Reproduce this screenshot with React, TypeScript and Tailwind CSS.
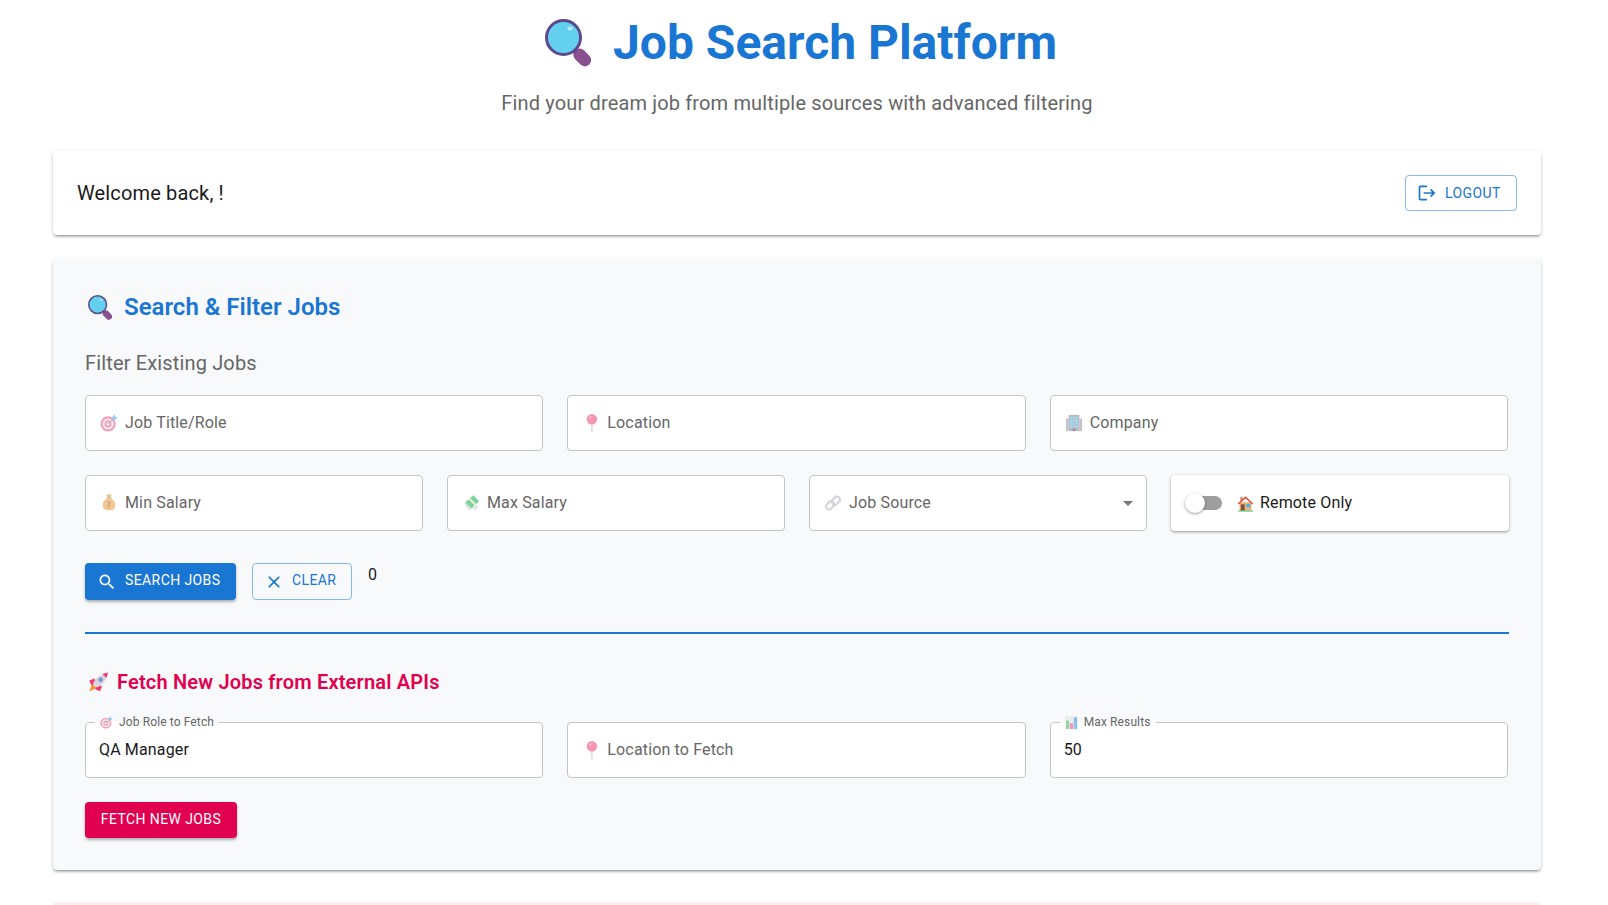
import type { ReactNode } from 'react';

const FONT = "font-['Roboto','Liberation_Sans',sans-serif]";
const CARD_SHADOW = 'shadow-[0_2px_3px_-1px_rgba(0,0,0,0.45),0_1px_5px_rgba(0,0,0,0.1)]';

// Emoji drawings, the reference has colour emoji next to most labels
const Magnifier = ({ className }: { className: string }) => (
  <svg viewBox="0 0 48 48" className={className}>
    <rect x="31" y="28.5" width="12.5" height="20" rx="6.2" transform="rotate(-45 37.2 38.5)" fill="#8a4f8f" />
    <rect x="27" y="28" width="4" height="6" transform="rotate(-45 29 31)" fill="#5c4a7e" />
    <circle cx="18.5" cy="18.5" r="17" fill="#62d0ee" stroke="#5d4a8c" strokeWidth="3" />
    <ellipse cx="25" cy="9.5" rx="2.6" ry="2" fill="#b5e9f7" />
  </svg>
);

const Target = ({ className = 'h-[18px] w-[18px]' }: { className?: string }) => (
  <svg viewBox="0 0 20 20" className={className}>
    <circle cx="9" cy="11" r="8.4" fill="#ef5f85" />
    <circle cx="9" cy="11" r="6" fill="#f4f0f2" />
    <circle cx="9" cy="11" r="4" fill="#ef5f85" />
    <circle cx="9" cy="11" r="1.8" fill="#f4f0f2" />
    <path d="M9 11 16 4" stroke="#6f8fb8" strokeWidth="1.4" />
    <path d="M13.5 3 16.5 .5 17 3 19.5 3.5 17 6.5 14.5 6z" fill="#55aef0" />
  </svg>
);

const Pin = () => (
  <svg viewBox="0 0 20 20" className="h-[18px] w-[18px]">
    <rect x="10.1" y="9" width="1.8" height="11" fill="#c9c5c7" />
    <circle cx="11" cy="5.8" r="5.8" fill="#f0527f" />
    <circle cx="9.2" cy="3.8" r="1.3" fill="#f79ab6" />
  </svg>
);

const Building = () => (
  <svg viewBox="0 0 20 20" className="h-[18px] w-[18px]">
    <rect x="1" y="5" width="3" height="14" fill="#9d9aa8" />
    <rect x="16" y="5" width="3" height="14" fill="#9d9aa8" />
    <rect x="4" y="1" width="12" height="18" fill="#8e8b9b" />
    <rect x="5.5" y="3" width="9" height="12" fill="#62c4ee" />
    <path d="M8.5 3v12M11.5 3v12M5.5 6h9M5.5 9h9M5.5 12h9" stroke="#8e8b9b" strokeWidth=".7" />
    <rect x="8.5" y="16" width="3" height="3" fill="#4a4858" />
  </svg>
);

const MoneyBag = () => (
  <svg viewBox="0 0 20 20" className="h-[18px] w-[18px]">
    <path d="M7 .5h6L11.5 4h-3z" fill="#e09a45" />
    <rect x="7.5" y="3.6" width="5" height="1.4" fill="#a9703a" />
    <path d="M7.5 5C4 7 3 10 3 13c0 3.5 2.5 5 7 5s7-1.5 7-5c0-3-1-6-4.5-8z" fill="#eca24e" />
    <path d="M10 8v7M8.6 9.8c0-1.6 2.8-1.6 2.8 0s-2.8 1.2-2.8 3c0 1.6 2.8 1.6 2.8 0" stroke="#a05f24" strokeWidth=".8" fill="none" />
  </svg>
);

const WingedMoney = () => (
  <svg viewBox="0 0 20 20" className="h-[18px] w-[18px]">
    <path d="M3 9 4 14 2.5 12 9 19 10.5 16z" fill="#cfd2d8" />
    <path d="M12 16 16 12 18 15 14 18z" fill="#cfd2d8" />
    <path d="M3.5 9.5 12.5 1.5 19 8 10.5 16z" fill="#22b36a" />
    <path d="M7 5.8 8.6 4.3 15.6 11.2 14 12.7z" fill="#f2e6a0" />
  </svg>
);

const LinkIcon = () => (
  <svg viewBox="0 0 20 20" className="h-[18px] w-[18px]" fill="none" stroke="#b8b5c6" strokeWidth="2.2">
    <rect x="1.8" y="9.2" width="10" height="6.6" rx="3.3" transform="rotate(-45 6.8 12.5)" />
    <rect x="8.2" y="4.2" width="10" height="6.6" rx="3.3" transform="rotate(-45 13.2 7.5)" />
  </svg>
);

const House = () => (
  <svg viewBox="0 0 20 20" className="h-[17px] w-[17px]">
    <rect x="4" y="2" width="2.5" height="5" fill="#c98a6a" />
    <rect x="3" y="8.5" width="14" height="10" fill="#eab47a" />
    <path d="M10 1.5 .8 10l1.3 1.2L10 4l7.9 7.2L19.2 10z" fill="#e8503f" />
    <rect x="4.5" y="11" width="4.5" height="7.5" fill="#7d5340" />
    <rect x="11" y="10.5" width="4.5" height="4" fill="#4fb3ee" />
    <rect x="1" y="18.2" width="18" height="1.3" fill="#57c46f" />
  </svg>
);

const Rocket = () => (
  <svg viewBox="0 0 20 20" className="h-[20px] w-[21px]">
    <path d="M4 12 .5 19.5 8 16z" fill="#f5922f" />
    <path d="M6 6.5 .8 8.5 3 13.5 7 11zM13.5 14 11.5 19.2 6.5 17 9 13z" fill="#f0386c" />
    <path d="M4.5 11.5C7 6 12 2 19.5.5 18 8 14 13 8.5 15.5z" fill="#d8d4e2" />
    <path d="M14 2 19.5.5 18 6z" fill="#f0386c" />
    <circle cx="12.2" cy="7.8" r="2.1" fill="#5a9ad6" stroke="#a8a3bc" strokeWidth=".7" />
  </svg>
);

const BarChart = () => (
  <svg viewBox="0 0 20 20" className="h-[13px] w-[13px]">
    <rect width="20" height="20" fill="#e4e6ea" />
    <rect x="1.5" y="7" width="5" height="13" fill="#4fbf6f" />
    <rect x="7.5" y="11" width="5" height="9" fill="#ef4f7f" />
    <rect x="13.5" y="2" width="5" height="18" fill="#3f9ae8" />
  </svg>
);

const FieldText = ({ icon, label }: { icon: ReactNode; label: string }) => (
  <span className="flex items-center">
    <span className="mr-[4px] flex w-[21px] justify-start opacity-60">{icon}</span>
    {label}
  </span>
);

const Field = ({ icon, label, select }: { icon: ReactNode; label: string; select?: boolean }) => (
  <div className="flex h-[56px] items-center justify-between rounded border border-[#c4c4c4] bg-white pl-[14px] pr-[6px] text-base tracking-[0.15px] text-[#666666]">
    <FieldText icon={icon} label={label} />
    {select && (
      <svg viewBox="0 0 24 24" className="h-6 w-6 fill-[#757575]">
        <path d="M7 10l5 5 5-5z" />
      </svg>
    )}
  </div>
);

// border gets notched by the legend, same as the floating label in the original
const FilledField = ({ icon, label, value }: { icon?: ReactNode; label: ReactNode; value?: string }) => (
  <fieldset className="flex h-[61px] rounded border border-[#c4c4c4] bg-white pl-[13px] text-base tracking-[0.15px] text-[#1a1a1a]">
    <legend className="-ml-[4px] flex h-[11px] items-center px-[5px] text-xs leading-[11px] tracking-[0.12px] text-[#666666]">
      {icon}
      {label}
    </legend>
    <div className="flex h-[43px] items-center">{value}</div>
  </fieldset>
);

const App = () => {
  return (
    <div className={`h-[905px] w-[1608px] overflow-hidden bg-white ${FONT}`}>
      <div className="w-[1594px] px-[53px] pt-[14px]">
        <header className="flex flex-col items-center">
          <h1 className="flex h-[58px] items-center text-5xl font-bold text-[#1976d2]">
            <Magnifier className="ml-[8px] mr-[20px] h-[48px] w-[48px]" />
            Job Search Platform
          </h1>
          <p className="mt-[16px] text-xl leading-[30px] tracking-[0.15px] text-[#666666]">
            Find your dream job from multiple sources with advanced filtering
          </p>
        </header>

        <section className={`mt-[33px] flex h-[84px] items-center justify-between rounded bg-white px-6 ${CARD_SHADOW}`}>
          <span className="text-xl tracking-[0.15px] text-[#1a1a1a]">Welcome back, !</span>
          <button className="flex h-[36px] w-[112px] items-center rounded border border-[#1976d2]/50 pl-[11px] text-sm font-[450] tracking-[0.4px] text-[#1976d2]">
            <svg viewBox="0 0 24 24" className="mr-[8px] h-5 w-5 fill-[#1976d2]">
              <path d="m17 7-1.41 1.41L18.17 11H8v2h10.17l-2.58 2.58L17 17l5-5zM4 5h8V3H4c-1.1 0-2 .9-2 2v14c0 1.1.9 2 2 2h8v-2H4z" />
            </svg>
            <span className="-mt-[1px]">LOGOUT</span>
          </button>
        </section>

        <section className={`mt-[24px] h-[611px] rounded bg-[#f8f9fa] px-[32px] pt-[32px] ${CARD_SHADOW}`}>
          <h2 className="flex h-[32px] items-center text-2xl font-semibold text-[#1976d2]">
            <Magnifier className="ml-[3px] mr-[11px] h-[25px] w-[25px]" />
            Search &amp; Filter Jobs
          </h2>
          <h3 className="mt-[25px] text-xl leading-[30px] tracking-[0.15px] text-[#666666]">Filter Existing Jobs</h3>

          <div className="mt-[17px] grid grid-cols-3 gap-6 pr-[1px]">
            <Field icon={<Target />} label="Job Title/Role" />
            <Field icon={<Pin />} label="Location" />
            <Field icon={<Building />} label="Company" />
          </div>

          <div className="mt-6 grid grid-cols-4 gap-6">
            <Field icon={<MoneyBag />} label="Min Salary" />
            <Field icon={<WingedMoney />} label="Max Salary" />
            <Field icon={<LinkIcon />} label="Job Source" select />
            <div className="flex h-[56px] w-[338px] items-center rounded bg-white pl-[14px] text-base tracking-[0.15px] text-[#1a1a1a] shadow-[0_1px_3px_rgba(0,0,0,0.4)]">
              <span className="relative mr-[14px] h-[20px] w-[37px]">
                <span className="absolute left-[3px] top-[3px] h-[14px] w-[34px] rounded-full bg-[#9e9e9e]" />
                <span className="absolute left-0 top-0 h-[20px] w-[20px] rounded-full bg-white shadow-[0_1px_3px_rgba(0,0,0,0.4)]" />
              </span>
              <span className="mr-[5px] flex w-[19px] justify-center"><House /></span>
              Remote Only
            </div>
          </div>

          <div className="mt-[32px] flex items-start gap-4">
            <button className="flex h-[37px] w-[151px] items-center rounded bg-[#1976d2] pl-[12px] text-sm font-[450] tracking-[0.4px] text-white shadow-[0_2px_3px_rgba(0,0,0,0.3)]">
              <svg viewBox="0 0 24 24" className="mr-[8px] h-5 w-5 fill-white">
                <path d="M15.5 14h-.79l-.28-.27C15.41 12.59 16 11.11 16 9.5 16 5.91 13.09 3 9.5 3S3 5.91 3 9.5 5.91 16 9.5 16c1.61 0 3.09-.59 4.23-1.57l.27.28v.79l5 4.99L20.49 19l-4.99-5zm-6 0C7.01 14 5 11.99 5 9.5S7.01 5 9.5 5 14 7.01 14 9.5 11.99 14 9.5 14z" />
              </svg>
              <span className="-mt-[3px]">SEARCH JOBS</span>
            </button>
            <button className="flex h-[37px] w-[100px] items-center rounded border border-[#1976d2]/50 pl-[11px] text-sm font-[450] tracking-[0.4px] text-[#1976d2]">
              <svg viewBox="0 0 24 24" className="mr-[8px] h-5 w-5 fill-[#1976d2]">
                <path d="M19 6.41 17.59 5 12 10.59 6.41 5 5 6.41 10.59 12 5 17.59 6.41 19 12 13.41 17.59 19 19 17.59 13.41 12z" />
              </svg>
              <span className="-mt-[3px]">CLEAR</span>
            </button>
            <span className="text-base leading-6 text-[#1a1a1a]">0</span>
          </div>

          <div className="mt-[32px] h-[2px] bg-[#1976d2]" />

          <h2 className="mt-[32px] flex h-[32px] items-center text-xl font-semibold tracking-[0.19px] text-[#e0004f]">
            <span className="ml-[2px] mr-[8px] flex w-[22px] justify-center"><Rocket /></span>
            Fetch New Jobs from External APIs
          </h2>

          <div className="mt-[19px] grid grid-cols-3 gap-6 pr-[1px]">
            <FilledField
              icon={<span className="mr-[6px] flex opacity-60"><Target className="h-[13px] w-[13px]" /></span>}
              label="Job Role to Fetch"
              value="QA Manager"
            />
            <div className="pt-[5px]">
              <Field icon={<Pin />} label="Location to Fetch" />
            </div>
            <FilledField
              icon={<span className="mr-[6px] flex opacity-60"><BarChart /></span>}
              label="Max Results"
              value="50"
            />
          </div>

          <button className="mt-[24px] flex h-[36px] w-[152px] items-center justify-center rounded bg-[#e0004f] text-sm font-[450] tracking-[0.4px] text-white shadow-[0_2px_3px_rgba(0,0,0,0.3)]">
            <span className="-mt-[2px]">FETCH NEW JOBS</span>
          </button>
        </section>

        <div className="mt-[32px] h-[80px] rounded bg-[#fdeeee]" />
      </div>
    </div>
  );
};

export default App;
